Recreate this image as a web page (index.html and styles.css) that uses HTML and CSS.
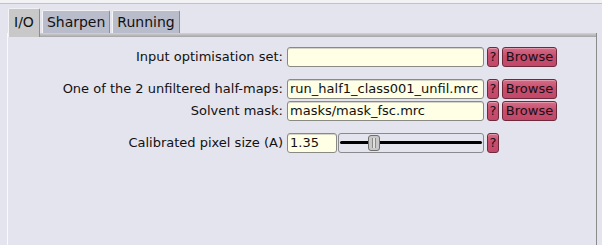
FILE: index.html
```html
<!DOCTYPE html>
<html>
    <head>
        <link rel="stylesheet" href="styles.css">
    </head>
    <body>
        <div class='topbar'></div>
        <div class='tabs'>
            <div class='tabbar'>
                <div class='tab active'>I/O</div>
                <div class='tab'>Sharpen</div>
                <div class='tab'>Running</div>
            </div>
            <div class='panel'>
                <div class='group'>
                    <div class='row'>
                        <label class='lbl'>Input optimisation set:</label>
                        <div class='field'></div>
                        <button class='help'>?</button>
                        <button class='browse'>Browse</button>
                    </div>
                </div>
                <div class='group'>
                    <div class='row'>
                        <label class='lbl'>One of the 2 unfiltered half-maps:</label>
                        <div class='field'>run_half1_class001_unfil.mrc</div>
                        <button class='help'>?</button>
                        <button class='browse'>Browse</button>
                    </div>
                    <div class='row'>
                        <label class='lbl'>Solvent mask:</label>
                        <div class='field'>masks/mask_fsc.mrc</div>
                        <button class='help'>?</button>
                        <button class='browse'>Browse</button>
                    </div>
                </div>
                <div class='group'>
                    <div class='row'>
                        <label class='lbl'>Calibrated pixel size (A)</label>
                        <div class='numslider'>
                            <div class='field small'>1.35</div>
                            <div class='slider'>
                                <div class='track'></div>
                                <div class='thumb'></div>
                            </div>
                        </div>
                        <button class='help'>?</button>
                    </div>
                </div>
            </div>
        </div>
    </body>
</html>
```

FILE: styles.css
```css
body {
    margin: 0;
    background: #e4e4ee;
    font-family: 'DejaVu Sans', sans-serif;
    color: #111;
    overflow: hidden;
}

.topbar {
    height: 3px;
    background: #f2f2f4;
    border-bottom: 1px solid #c2c2c6;
}

.tabs {
    margin: 4px 5px 0 7px;
}

.tabbar {
    display: flex;
    align-items: flex-end;
    gap: 2px;
    height: 25px;
    padding-left: 1px;
}

.tab {
    font-size: 14px;
    line-height: 22px;
    height: 22px;
    padding: 0 4px;
    background: #b9bccb;
    border: 1px solid #8c8c94;
    border-left-color: #f4f4f6;
    border-top-color: #f0f0f2;
    border-bottom: none;
    border-radius: 2px 2px 0 0;
}

.tab.active {
    position: relative;
    z-index: 1;
    background: #c8c8c8;
    padding: 2px 5px 4px 5px;
    margin-bottom: -4px;
}

/* top edge of the tab body is a small grey gradient strip */
.panel {
    border-left: 1px solid #fafafa;
    border-right: 1px solid #8a8a8a;
    background: linear-gradient(#d4d4d6, #a4a4a8) top / 100% 4px no-repeat, #e4e4ee;
    min-height: 210px;
    padding-top: 14px;
    display: flex;
    flex-direction: column;
    gap: 12px;
}

.group {
    display: flex;
    flex-direction: column;
    gap: 2px;
}

.row {
    display: grid;
    grid-template-columns: 276px 197px 12px 55px;
    column-gap: 3px;
    height: 20px;
    font-size: 13px;
}

.lbl {
    text-align: right;
    line-height: 20px;
    white-space: nowrap;
    padding-right: 1px;
}

.field {
    box-sizing: border-box;
    height: 20px;
    background: #ffffe6;
    border: 1px solid #8a8a84;
    border-radius: 3px;
    box-shadow: inset 0 1px 0 #d6d6c8;
    padding: 0 2px;
    line-height: 18px;
    white-space: nowrap;
    overflow: hidden;
}

.help, .browse {
    box-sizing: border-box;
    height: 20px;
    padding: 0;
    font-family: 'DejaVu Sans', sans-serif;
    font-size: 13px;
    color: #1a1016;
    background: linear-gradient(#d66c89, #c64e6e 45%, #c24868);
    border: 1px solid #6e2a3c;
    border-radius: 3px;
    box-shadow: inset 0 1px 0 #e498ac;
    line-height: 18px;
}

.numslider {
    display: flex;
    gap: 1px;
}

.field.small {
    width: 50px;
    flex: none;
}

.slider {
    position: relative;
    flex: 1;
    box-sizing: border-box;
    height: 20px;
    border: 1px solid #8a8a8e;
    border-radius: 3px;
}

.track {
    position: absolute;
    left: 1px;
    right: 1px;
    top: 7px;
    height: 3px;
    background: #000;
    border-radius: 2px;
}

.thumb {
    position: absolute;
    left: 29px;
    top: 1px;
    width: 12px;
    height: 16px;
    box-sizing: border-box;
    background: #c8c8c8;
    border: 1px solid #6e6e6e;
    border-radius: 3px;
}

.thumb::after {
    content: '';
    position: absolute;
    left: 3px;
    top: 2px;
    width: 2px;
    height: 10px;
    border-left: 1px solid #8a8a8a;
    border-right: 1px solid #8a8a8a;
    background: #e0e0e0;
}
```
